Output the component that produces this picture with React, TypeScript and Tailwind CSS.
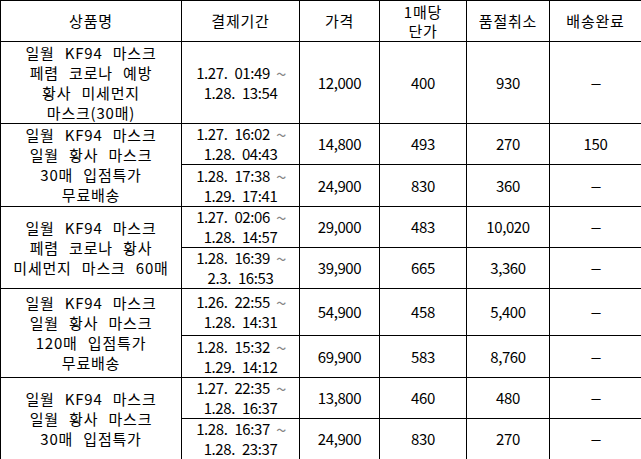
import React from "react";

type Sub = { d1: string; d2: string; price: string; unit: string; cancel: string; done: string; h: number };
type Group = { name: string[]; subs: Sub[] };

const groups: Group[] = [
  {
    name: ["일월 KF94 마스크", "페렴 코로나 예방", "황사 미세먼지", "마스크(30매)"],
    subs: [{ d1: "1.27. 01:49", d2: "1.28. 13:54", price: "12,000", unit: "400", cancel: "930", done: "-", h: 82 }],
  },
  {
    name: ["일월 KF94 마스크", "일월 황사 마스크", "30매 입점특가", "무료배송"],
    subs: [
      { d1: "1.27. 16:02", d2: "1.28. 04:43", price: "14,800", unit: "493", cancel: "270", done: "150", h: 41 },
      { d1: "1.28. 17:38", d2: "1.29. 17:41", price: "24,900", unit: "830", cancel: "360", done: "-", h: 42 },
    ],
  },
  {
    name: ["일월 KF94 마스크", "페렴 코로나 황사", "미세먼지 마스크 60매"],
    subs: [
      { d1: "1.27. 02:06", d2: "1.28. 14:57", price: "29,000", unit: "483", cancel: "10,020", done: "-", h: 41 },
      { d1: "1.28. 16:39", d2: "2.3. 16:53", price: "39,900", unit: "665", cancel: "3,360", done: "-", h: 41 },
    ],
  },
  {
    name: ["일월 KF94 마스크", "일월 황사 마스크", "120매 입점특가", "무료배송"],
    subs: [
      { d1: "1.26. 22:55", d2: "1.28. 14:31", price: "54,900", unit: "458", cancel: "5,400", done: "-", h: 47 },
      { d1: "1.28. 15:32", d2: "1.29. 14:12", price: "69,900", unit: "583", cancel: "8,760", done: "-", h: 42 },
    ],
  },
  {
    name: ["일월 KF94 마스크", "일월 황사 마스크", "30매 입점특가"],
    subs: [
      { d1: "1.27. 22:35", d2: "1.28. 16:37", price: "13,800", unit: "460", cancel: "480", done: "-", h: 41 },
      { d1: "1.28. 16:37", d2: "1.28. 23:37", price: "24,900", unit: "830", cancel: "270", done: "-", h: 40 },
    ],
  },
];

const td = "border border-black p-0 text-center align-middle";
const ko = "text-[15px] tracking-[0.8px]";
const num = "text-[15px] leading-[20px] tracking-[-0.4px]";

function Cell({ v }: { v: string }) {
  if (v === "-") {
    return <span className="inline-block scale-x-[2.4]">-</span>;
  }
  return <>{v}</>;
}

export default function App() {
  return (
    <div className="w-[641px] h-[459px] overflow-hidden bg-white text-black font-['Noto_Sans_CJK_KR',sans-serif]">
      <table className="table-fixed border-collapse w-[641px]">
        <colgroup>
          <col className="w-[181px]" />
          <col className="w-[118px]" />
          <col className="w-[80px]" />
          <col className="w-[87px]" />
          <col className="w-[83px]" />
          <col className="w-[92px]" />
        </colgroup>
        <tbody>
          <tr className="h-[41px]">
            <td className={`${td} ${ko} leading-[20px]`}>상품명</td>
            <td className={`${td} ${ko} leading-[20px]`}>결제기간</td>
            <td className={`${td} ${ko} leading-[20px]`}>가격</td>
            <td className={`${td} ${ko} leading-[19.5px]`}>
              <div>1매당</div>
              <div>단가</div>
            </td>
            <td className={`${td} ${ko} leading-[20px]`}>품절취소</td>
            <td className={`${td} ${ko} leading-[20px]`}>배송완료</td>
          </tr>
          {groups.map((g, gi) =>
            g.subs.map((s, si) => (
              <tr key={`${gi}-${si}`} style={{ height: s.h }}>
                {si === 0 && (
                  <td rowSpan={g.subs.length} className={`${td} ${ko} leading-[20px] [word-spacing:6px]`}>
                    {g.name.map((l, i) => (
                      <div key={i}>{l}</div>
                    ))}
                  </td>
                )}
                <td className={`${td} ${num} [word-spacing:4px]`}>
                  <div>
                    {s.d1} <span className="inline-block scale-125 text-[#888]">~</span>
                  </div>
                  <div>{s.d2}</div>
                </td>
                <td className={`${td} ${num}`}>{s.price}</td>
                <td className={`${td} ${num}`}>{s.unit}</td>
                <td className={`${td} ${num}`}>{s.cancel}</td>
                <td className={`${td} ${num}`}>
                  <Cell v={s.done} />
                </td>
              </tr>
            ))
          )}
        </tbody>
      </table>
    </div>
  );
}
